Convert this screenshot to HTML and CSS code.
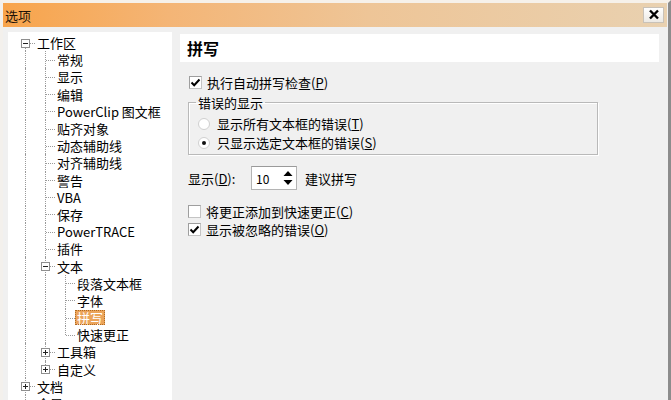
FILE: index.html
```html
<!DOCTYPE html>
<html lang="zh-CN">
<head>
<meta charset="utf-8">
<title>选项</title>
<link rel="stylesheet" href="styles.css">
</head>
<body>
<div class="window">
  <div class="titlebar">
    <span class="title">选项</span>
    <span class="close"><svg width="12" height="11" viewBox="0 0 12 11"><path d="M2 1.5 L10 9.5 M10 1.5 L2 9.5" stroke="#000" stroke-width="2.4" fill="none"/></svg></span>
  </div>
  <div class="body">
    <div class="tree">
      <div class="row"><span class="g exp down"><i class="box minus"></i></span><span class="lbl">工作区</span></div>
      <div class="row"><span class="g v"></span><span class="g tee"></span><span class="lbl">常规</span></div>
      <div class="row"><span class="g v"></span><span class="g tee"></span><span class="lbl">显示</span></div>
      <div class="row"><span class="g v"></span><span class="g tee"></span><span class="lbl">编辑</span></div>
      <div class="row"><span class="g v"></span><span class="g tee"></span><span class="lbl">PowerClip 图文框</span></div>
      <div class="row"><span class="g v"></span><span class="g tee"></span><span class="lbl">贴齐对象</span></div>
      <div class="row"><span class="g v"></span><span class="g tee"></span><span class="lbl">动态辅助线</span></div>
      <div class="row"><span class="g v"></span><span class="g tee"></span><span class="lbl">对齐辅助线</span></div>
      <div class="row"><span class="g v"></span><span class="g tee"></span><span class="lbl">警告</span></div>
      <div class="row"><span class="g v"></span><span class="g tee"></span><span class="lbl">VBA</span></div>
      <div class="row"><span class="g v"></span><span class="g tee"></span><span class="lbl">保存</span></div>
      <div class="row"><span class="g v"></span><span class="g tee"></span><span class="lbl">PowerTRACE</span></div>
      <div class="row"><span class="g v"></span><span class="g tee"></span><span class="lbl">插件</span></div>
      <div class="row"><span class="g v"></span><span class="g exp through"><i class="box minus"></i></span><span class="lbl">文本</span></div>
      <div class="row"><span class="g v"></span><span class="g v"></span><span class="g tee"></span><span class="lbl">段落文本框</span></div>
      <div class="row"><span class="g v"></span><span class="g v"></span><span class="g tee"></span><span class="lbl">字体</span></div>
      <div class="row"><span class="g v"></span><span class="g v"></span><span class="g tee"></span><span class="lbl sel">拼写</span></div>
      <div class="row"><span class="g v"></span><span class="g v"></span><span class="g ell"></span><span class="lbl">快速更正</span></div>
      <div class="row"><span class="g v"></span><span class="g exp through"><i class="box plus"></i></span><span class="lbl">工具箱</span></div>
      <div class="row"><span class="g v"></span><span class="g exp up"><i class="box plus"></i></span><span class="lbl">自定义</span></div>
      <div class="row"><span class="g exp through"><i class="box plus"></i></span><span class="lbl">文档</span></div>
      <div class="row"><span class="g exp up"><i class="box plus"></i></span><span class="lbl">全局</span></div>
    </div>
    <div class="panel">
      <div class="panel-head">拼写</div>
      <div class="panel-body">
        <div class="opt first"><span class="cb"><svg width="11" height="11" viewBox="0 0 11 11"><path d="M1.5 5.5 L4.2 8.2 L9.5 2.5" stroke="#000" stroke-width="2" fill="none"/></svg></span><span>执行自动拼写检查(<u>P</u>)</span></div>
        <fieldset class="group">
          <legend>错误的显示</legend>
          <div class="opt radio-row top"><span class="rb"></span><span>显示所有文本框的错误(<u>T</u>)</span></div>
          <div class="opt radio-row"><span class="rb on"></span><span>只显示选定文本框的错误(<u>S</u>)</span></div>
        </fieldset>
        <div class="spin-row">
          <span class="spin-label">显示(<u>D</u>):</span>
          <span class="spin">
            <span class="spin-val">10</span>
            <span class="spin-btns">
              <svg width="12" height="20" viewBox="0 0 12 20"><path d="M1.5 8 L6 3 L10.5 8 Z" fill="#000"/><path d="M1.5 12 L6 17 L10.5 12 Z" fill="#000"/></svg>
            </span>
          </span>
          <span class="spin-after">建议拼写</span>
        </div>
        <div class="opt gap"><span class="cb"></span><span>将更正添加到快速更正(<u>C</u>)</span></div>
        <div class="opt"><span class="cb"><svg width="11" height="11" viewBox="0 0 11 11"><path d="M1.5 5.5 L4.2 8.2 L9.5 2.5" stroke="#000" stroke-width="2" fill="none"/></svg></span><span>显示被忽略的错误(<u>O</u>)</span></div>
      </div>
    </div>
  </div>
</div>
</body>
</html>
```
FILE: styles.css
```css
* { box-sizing: border-box; }
html, body {
  margin: 0;
  padding: 0;
  width: 671px;
  height: 400px;
  overflow: hidden;
  background: #f0f0f0;
  font-family: "Noto Sans CJK SC", "Noto Sans", sans-serif;
  font-size: 13px;
  color: #000;
}
.window {
  width: 671px;
  height: 400px;
  display: flex;
  flex-direction: column;
  border-right: 3px solid #8c8c8c;
  border-top: 3px solid #f6f1ea;
  border-left: 3px solid #f3f0ec;
  background: #f0f0f0;
}
.titlebar {
  flex: none;
  height: 24px;
  margin-top: 0;
  margin-right: 1px;
  display: flex;
  align-items: center;
  justify-content: space-between;
  padding: 0 3px 0 2px;
  background: linear-gradient(to right, #f8a44b 0%, #f4b576 25%, #eec597 55%, #e9d1b0 100%);
}
.title {
  font-size: 13px;
  color: #1c1208;
  line-height: 1;
}
.close {
  width: 21px;
  height: 16px;
  background: linear-gradient(#ffffff, #ece9e4);
  border: 1px solid #c9c2b8;
  display: flex;
  align-items: center;
  justify-content: center;
  margin-top: -1px;
}
.body {
  flex: 1;
  display: flex;
  gap: 8px;
  padding: 5px 9px 0 5px;
  min-height: 0;
}
.tree {
  flex: none;
  width: 164px;
  background: #fff;
  padding: 2px 0 0 7px;
  overflow: hidden;
}
.row {
  height: 17.2px;
  display: flex;
  align-items: stretch;
  white-space: nowrap;
}
.lbl {
  align-self: center;
  padding: 0 2px;
  line-height: 15px;
  height: 15px;
}
.lbl.sel {
  background: #eba45a;
  color: #fff;
  outline: 1px dotted #b06a20;
  outline-offset: -1px;
}
.g {
  flex: none;
  width: 20px;
  position: relative;
}
.g.v::before,
.g.tee::before,
.g.ell::before,
.g.exp.through::before,
.g.exp.up::before,
.g.exp.down::before {
  content: "";
  position: absolute;
  left: 10px;
  top: 0;
  bottom: 0;
  border-left: 1px dotted #9a9a9a;
}
.g.ell::before,
.g.exp.up::before { bottom: 50%; }
.g.exp.down::before { top: 50%; }
.g.tee::after,
.g.ell::after,
.g.exp::after {
  content: "";
  position: absolute;
  left: 11px;
  right: 0;
  top: 50%;
  border-top: 1px dotted #9a9a9a;
}
.g.exp::after { left: 15px; }
.box {
  position: absolute;
  left: 6px;
  top: 50%;
  margin-top: -4px;
  width: 9px;
  height: 9px;
  background: #fff;
  border: 1px solid #8e8e8e;
  z-index: 1;
}
.box::before {
  content: "";
  position: absolute;
  left: 1px;
  right: 1px;
  top: 3px;
  height: 1px;
  background: #222;
}
.box.plus::after {
  content: "";
  position: absolute;
  top: 1px;
  bottom: 1px;
  left: 3px;
  width: 1px;
  background: #222;
}
.panel {
  flex: 1;
  display: flex;
  flex-direction: column;
  padding-top: 2px;
}
.panel-head {
  height: 28px;
  background: #fff;
  font-size: 16px;
  font-weight: bold;
  padding-left: 7px;
  display: flex;
  align-items: center;
}
.panel-body {
  padding-left: 8px;
  display: flex;
  flex-direction: column;
}
.opt {
  display: flex;
  align-items: center;
  height: 18px;
  white-space: nowrap;
}
.opt.first { margin-top: 11px; padding-left: 1px; }
.opt.gap { margin-top: 12px; }
.cb {
  width: 13px;
  height: 13px;
  background: #fff;
  border: 1px solid #c4c4c4;
  border-top-color: #9e9e9e;
  border-left-color: #9e9e9e;
  margin-right: 5px;
  display: flex;
  align-items: center;
  justify-content: center;
  flex: none;
}
.group {
  margin: 4px 0 0 0;
  width: 410px;
  padding: 0 0 2px 9px;
  border: 1px solid #b9b9b9;
  box-shadow: inset 1px 1px 0 #fff, 1px 1px 0 #fff;
}
.group legend {
  padding: 0 2px;
  margin-left: -2px;
  line-height: 15px;
}
.radio-row { height: 19px; }
.radio-row.top { margin-top: 4px; }
.rb {
  width: 12px;
  height: 12px;
  border-radius: 50%;
  background: #fff;
  border: 1px solid #d0d0d0;
  margin-right: 7px;
  position: relative;
  flex: none;
}
.rb.on::after {
  content: "";
  position: absolute;
  left: 3px;
  top: 3px;
  width: 4px;
  height: 4px;
  border-radius: 50%;
  background: #111;
}
.spin-row {
  display: flex;
  align-items: center;
  margin-top: 11px;
  height: 24px;
}
.spin-label { width: 63px; }
.spin {
  width: 46px;
  height: 24px;
  background: #fff;
  border: 1px solid #b4b4b4;
  border-top-color: #9a9a9a;
  display: flex;
  align-items: center;
  justify-content: space-between;
  padding: 0 2px 0 4px;
  font-size: 12px;
}
.spin-btns {
  display: flex;
  align-items: center;
  height: 20px;
}
.spin-after { margin-left: 8px; }
u { text-decoration: underline; text-underline-offset: 1px; }
```
